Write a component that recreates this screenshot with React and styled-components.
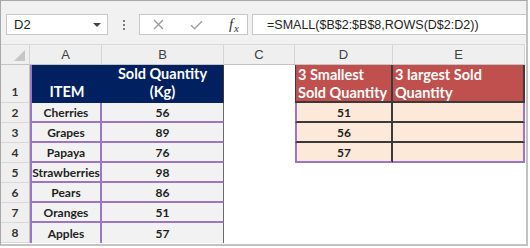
import styled, { createGlobalStyle } from 'styled-components';

const GlobalStyle = createGlobalStyle`
  html, body {
    margin: 0;
    padding: 0;
    background: #fff;
  }
`;

const PURPLE = '#9c76c6';
const DARK = '#3c3a38';

const Frame = styled.div`
  width: 528px;
  height: 246px;
  box-sizing: border-box;
  border-top: 1px solid #a8a8a8;
  border-left: 1px solid #a8a8a8;
  border-right: 2px solid #c2c2c2;
  border-bottom: 2px solid #c2c2c2;
  display: flex;
  flex-direction: column;
  overflow: hidden;
  background: #fff;
`;

const Toolbar = styled.div`
  height: 43px;
  flex: none;
  box-sizing: border-box;
  background: #f1f1f1;
  display: flex;
  align-items: flex-start;
  padding: 13px 0 0 5px;
`;

const Box = styled.div`
  height: 21px;
  box-sizing: border-box;
  background: #fff;
  border: 1px solid #c8c8c8;
  display: flex;
  align-items: center;
  font-family: 'Liberation Sans', Arial, sans-serif;
  color: #222;
`;

const NameBox = styled(Box)`
  width: 102px;
  padding: 0 6px 0 7px;
  font-size: 13px;
  justify-content: space-between;
`;

const Caret = styled.span`
  width: 0;
  height: 0;
  border-left: 4px solid transparent;
  border-right: 4px solid transparent;
  border-top: 4px solid #444;
`;

const Grip = styled.div`
  width: 31px;
  height: 21px;
  display: flex;
  flex-direction: column;
  align-items: center;
  justify-content: center;
  gap: 2px;

  span {
    width: 2px;
    height: 2px;
    background: #555;
    border-radius: 1px;
  }
`;

const FuncBox = styled(Box)`
  width: 109px;
  padding: 0 8px 0 13px;
  justify-content: space-between;
`;

const Fx = styled.span`
  font-family: 'Liberation Serif', 'Times New Roman', serif;
  font-style: italic;
  font-size: 15px;
  color: #333;
  display: flex;
  align-items: flex-end;

  small {
    font-size: 11px;
    margin-left: 1px;
    margin-bottom: -1px;
  }
`;

const FormulaBox = styled(Box)`
  flex: 1;
  margin-left: 4px;
  border-right: none;
  padding-left: 14px;
  font-size: 12.5px;
`;

const Sheet = styled.div`
  display: grid;
  grid-template-columns: 29px 72px 122px 71px 98px 132px;
  grid-template-rows: 21px 38px repeat(7, 20px);
  font-family: 'Lato', 'Liberation Sans', sans-serif;
`;

const Cell = styled.div`
  box-sizing: border-box;
  display: flex;
  align-items: ${(p) => (p.$bottom ? 'flex-end' : p.$top ? 'flex-start' : 'center')};
  justify-content: ${(p) => (p.$left ? 'flex-start' : 'center')};
  text-align: ${(p) => (p.$left ? 'left' : 'center')};
  background: ${(p) => p.$bg || '#fff'};
  color: ${(p) => p.$color || '#1e1e1e'};
  font-size: ${(p) => p.$size || 12}px;
  font-weight: 700;
  line-height: ${(p) => p.$lh || 'normal'};
  white-space: nowrap;
  padding: ${(p) => p.$pad || '0'};
  border-top: ${(p) => p.$bt || 'none'};
  border-left: ${(p) => p.$bl || 'none'};
  border-right: ${(p) => p.$br || 'none'};
  border-bottom: ${(p) => p.$bb || 'none'};
`;

const ColHead = styled(Cell)`
  background: #efefef;
  font-family: 'Liberation Sans', Arial, sans-serif;
  font-weight: 400;
  font-size: 13px;
  color: #404040;
  border-top: 1px solid #dadada;
  border-right: 1px solid #d4d4d4;
  border-bottom: 1px solid #c4c4c4;
`;

const RowHead = styled(Cell)`
  background: #efefef;
  color: #333;
  border-right: 1px solid #c4c4c4;
  border-bottom: 1px solid #d8d8d8;
`;

const Corner = styled(ColHead)`
  align-items: flex-end;
  justify-content: flex-end;
  padding: 0 4px 3px 0;

  span {
    width: 0;
    height: 0;
    border-left: 11px solid transparent;
    border-bottom: 11px solid #c6c6c6;
  }
`;

const items = [
  ['Cherries', 56, 51],
  ['Grapes', 89, 56],
  ['Papaya', 76, 57],
  ['Strawberries', 98],
  ['Pears', 86],
  ['Oranges', 51],
  ['Apples', 57],
];

const purple = `2px solid ${PURPLE}`;
const dark = `2px solid ${DARK}`;

const Cross = () => (
  <svg width="11" height="11" viewBox="0 0 11 11">
    <path d="M1 1L10 10M10 1L1 10" stroke="#9a9a9a" strokeWidth="1.3" fill="none" />
  </svg>
);

const Check = () => (
  <svg width="13" height="10" viewBox="0 0 13 10">
    <path d="M1 5.2L4.6 8.8L12 1.2" stroke="#a2a2a2" strokeWidth="1.5" fill="none" />
  </svg>
);

const App = () => {
  return (
    <Frame>
      <GlobalStyle />
      <Toolbar>
        <NameBox>
          D2
          <Caret />
        </NameBox>
        <Grip>
          <span />
          <span />
          <span />
        </Grip>
        <FuncBox>
          <Cross />
          <Check />
          <Fx>
            f<small>x</small>
          </Fx>
        </FuncBox>
        <FormulaBox>=SMALL($B$2:$B$8,ROWS(D$2:D2))</FormulaBox>
      </Toolbar>

      <Sheet>
        <Corner>
          <span />
        </Corner>
        {['A', 'B', 'C', 'D', 'E'].map((c) => (
          <ColHead key={c}>{c}</ColHead>
        ))}

        <RowHead $bottom $pad="0 0 3px">1</RowHead>
        <Cell $bg="#002060" $color="#fff" $size={14.5} $bottom $pad="0 0 3px" $bl={purple}>
          ITEM
        </Cell>
        <Cell $bg="#002060" $color="#fff" $size={14.5} $lh="18px" $bottom $pad="0 0 2px" $br={`1px solid ${DARK}`}>
          Sold Quantity
          <br />
          (Kg)
        </Cell>
        <Cell />
        <Cell
          $bg="#c0504d"
          $color="#fff"
          $size={14.5}
          $lh="18px"
          $left
          $top
          $pad="1px 0 0 2px"
          $bl={`1px solid ${DARK}`}
          $br={dark}
          $bb={dark}
        >
          3 Smallest
          <br />
          Sold Quantity
        </Cell>
        <Cell
          $bg="#c0504d"
          $color="#fff"
          $size={14.5}
          $lh="18px"
          $left
          $top
          $pad="1px 0 0 2px"
          $br={dark}
          $bb={dark}
        >
          3 largest Sold
          <br />
          Quantity
        </Cell>

        {items.map(([name, qty, small], i) => {
          const inTop = i < 3;
          const lastTop = i === 2;
          return [
            <RowHead key={`r${i}`}>{i + 2}</RowHead>,
            <Cell key={`a${i}`} $bg="#f2f2f2" $bl={purple} $br={purple} $bb={i < 6 ? purple : 'none'}>
              {name}
            </Cell>,
            <Cell key={`b${i}`} $bg="#f2f2f2" $br={`1px solid #6a6a6a`} $bb={i < 6 ? purple : 'none'}>
              {qty}
            </Cell>,
            <Cell key={`c${i}`} />,
            inTop ? (
              <Cell key={`d${i}`} $bg="#fde9d9" $bl={purple} $br={dark} $bb={lastTop ? purple : dark}>
                {small}
              </Cell>
            ) : (
              <Cell key={`d${i}`} />
            ),
            inTop ? (
              <Cell key={`e${i}`} $bg="#fde9d9" $br={purple} $bb={lastTop ? purple : dark} />
            ) : (
              <Cell key={`e${i}`} />
            ),
          ];
        })}
      </Sheet>
    </Frame>
  );
};

export default App;
